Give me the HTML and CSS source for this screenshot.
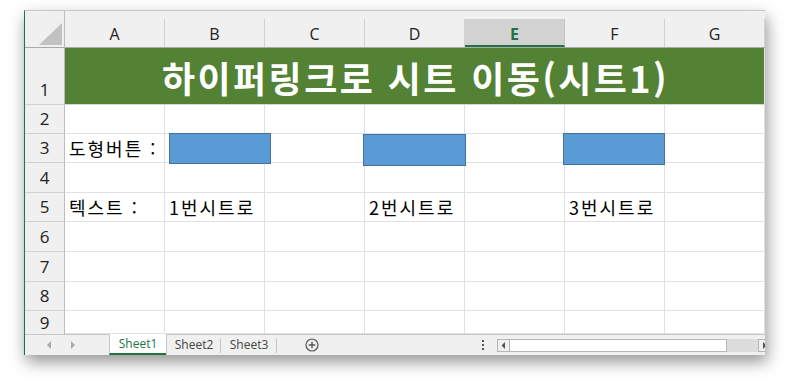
FILE: index.html
```html
<!DOCTYPE html>
<html lang="ko">
<head>
<meta charset="utf-8">
<title>Sheet</title>
<link rel="stylesheet" href="styles.css">
</head>
<body>
<div class="page">
  <div class="window">
    <div class="grid">
      <div class="corner"><svg width="40" height="37" viewBox="0 0 40 37"><polygon points="37,12 37,34 14,34" fill="#c2c2c2"/></svg></div>
      <div class="colh"><span>A</span></div>
      <div class="colh"><span>B</span></div>
      <div class="colh"><span>C</span></div>
      <div class="colh"><span>D</span></div>
      <div class="colh sel"><span>E</span></div>
      <div class="colh"><span>F</span></div>
      <div class="colh"><span>G</span></div>

      <div class="rowh r1">1</div>
      <div class="title">하이퍼링크로 시트 이동(시트1)</div>

      <div class="rowh">2</div>
      <div class="cell"></div><div class="cell"></div><div class="cell"></div><div class="cell"></div><div class="cell"></div><div class="cell"></div><div class="cell"></div>

      <div class="rowh">3</div>
      <div class="cell txt">도형버튼 :</div><div class="cell"></div><div class="cell"></div><div class="cell"></div><div class="cell"></div><div class="cell"></div><div class="cell"></div>

      <div class="rowh">4</div>
      <div class="cell"></div><div class="cell"></div><div class="cell"></div><div class="cell"></div><div class="cell"></div><div class="cell"></div><div class="cell"></div>

      <div class="rowh">5</div>
      <div class="cell txt">텍스트 :</div><div class="cell txt">1번시트로</div><div class="cell"></div><div class="cell txt">2번시트로</div><div class="cell"></div><div class="cell txt">3번시트로</div><div class="cell"></div>

      <div class="rowh">6</div>
      <div class="cell"></div><div class="cell"></div><div class="cell"></div><div class="cell"></div><div class="cell"></div><div class="cell"></div><div class="cell"></div>

      <div class="rowh">7</div>
      <div class="cell"></div><div class="cell"></div><div class="cell"></div><div class="cell"></div><div class="cell"></div><div class="cell"></div><div class="cell"></div>

      <div class="rowh">8</div>
      <div class="cell"></div><div class="cell"></div><div class="cell"></div><div class="cell"></div><div class="cell"></div><div class="cell"></div><div class="cell"></div>

      <div class="rowh r9">9</div>
      <div class="cell"></div><div class="cell"></div><div class="cell"></div><div class="cell"></div><div class="cell"></div><div class="cell"></div><div class="cell"></div>
    </div>

    <div class="tabbar">
      <div class="nav">
        <svg width="6" height="8" viewBox="0 0 6 8"><polygon points="5,0 5,8 1,4" fill="#a8a8a8"/></svg>
        <svg width="6" height="8" viewBox="0 0 6 8"><polygon points="1,0 1,8 5,4" fill="#a8a8a8"/></svg>
      </div>
      <div class="tab active">Sheet1</div>
      <div class="tab">Sheet2</div>
      <div class="tab">Sheet3</div>
      <div class="add"><svg width="14" height="14" viewBox="0 0 14 14"><circle cx="7" cy="7" r="6" fill="none" stroke="#555" stroke-width="1.2"/><path d="M7 3.8V10.2M3.8 7H10.2" stroke="#555" stroke-width="1.4"/></svg></div>
      <div class="dots"><i></i><i></i><i></i></div>
      <div class="hscroll">
        <div class="btn"><svg width="5" height="7" viewBox="0 0 5 7"><polygon points="4,0 4,7 0.5,3.5" fill="#555"/></svg></div>
        <div class="track"></div>
        <div class="rest"></div>
        <div class="btn r"><svg width="5" height="7" viewBox="0 0 5 7"><polygon points="1,0 1,7 4.5,3.5" fill="#555"/></svg></div>
      </div>
    </div>

    <div class="shape s1"></div>
    <div class="shape s2"></div>
    <div class="shape s3"></div>
  </div>
</div>
</body>
</html>
```

FILE: styles.css
```css
* { box-sizing: border-box; }
html, body { margin: 0; padding: 0; background: #fff; }
body { font-family: "Noto Sans CJK KR", "Noto Sans", sans-serif; }

.page {
  padding: 10px 0 0 24px;
  width: 790px;
  height: 391px;
  overflow: hidden;
}

.window {
  position: relative;
  width: 741px;
  height: 345px;
  border-top: 1px solid #c8c8c8;
  border-left: 1px solid #217346;
  background: #fff;
  box-shadow: 2px 7px 15px rgba(0, 0, 0, 0.42);
  overflow: hidden;
}

.grid {
  display: grid;
  grid-template-columns: 40px repeat(7, 100px);
  grid-template-rows: 37px 57px 29px 29px 30px 29px 30px 30px 29px 23px;
  background: #fff;
}

.corner {
  background: #f0f0f0;
  border-right: 1px solid #bdbdbd;
  border-bottom: 1px solid #a9a9a9;
}
.corner svg { display: block; }

.colh {
  background: #f0f0f0;
  padding-top: 8px;
  border-bottom: 1px solid #a9a9a9;
}
.colh span {
  display: flex;
  height: 100%;
  align-items: center;
  justify-content: center;
  border-right: 1px solid #d2d2d2;
  font-family: "Open Sans", "Noto Sans", sans-serif;
  font-size: 16px;
  color: #222;
  padding-top: 1px;
}
.colh.sel span {
  background: #d2d2d2;
  color: #217346;
  font-weight: 700;
  border-bottom: 2px solid #217346;
  border-right-color: #c4c4c4;
  padding-top: 3px;
}

.rowh {
  background: #f0f0f0;
  border-right: 1px solid #bdbdbd;
  border-bottom: 1px solid #d2d2d2;
  display: flex;
  align-items: flex-end;
  justify-content: center;
  font-family: "Open Sans", "Noto Sans", sans-serif;
  font-size: 17px;
  line-height: 20px;
  color: #222;
  padding-bottom: 4px;
}
.rowh.r9 { border-bottom: none; padding-bottom: 0; line-height: 22px; }

.title {
  grid-column: span 7;
  background: #548235;
  color: #fff;
  font-weight: 700;
  font-size: 36px;
  line-height: 40px;
  letter-spacing: 2.4px;
  display: flex;
  align-items: center;
  justify-content: center;
  padding: 1px 0 0 2px;
  border-right: 1px solid #e1e1e1;
  border-bottom: 1px solid #d6d6d6;
}

.cell {
  border-right: 1px solid #e1e1e1;
  border-bottom: 1px solid #e1e1e1;
}
.cell.txt {
  display: flex;
  align-items: flex-end;
  padding: 0 0 3px 4px;
  font-size: 18px;
  letter-spacing: 2px;
  line-height: 22px;
  color: #000;
  white-space: nowrap;
}

.tabbar {
  display: flex;
  align-items: stretch;
  height: 21px;
  background: #f0f0f0;
  border-top: 1px solid #c6c6c6;
  font-family: "Open Sans", "Noto Sans", sans-serif;
  font-size: 12px;
  color: #444;
}
.tabbar > * { flex-shrink: 0; }
.nav {
  width: 84px;
  display: flex;
  align-items: center;
  justify-content: flex-start;
  gap: 18px;
  padding-left: 21px;
}
.nav svg { display: block; }
.tab {
  width: 56px;
  display: flex;
  align-items: center;
  justify-content: center;
  position: relative;
  padding-bottom: 1px;
}
.tab::after {
  content: "";
  position: absolute;
  right: 0;
  top: 3px;
  bottom: 2px;
  width: 1px;
  background: #c6c6c6;
}
.tab.active {
  width: 57px;
  background: #fff;
  color: #217346;
  border-left: 1px solid #c6c6c6;
  border-bottom: 2px solid #217346;
  margin-top: -1px;
  padding-bottom: 0;
}
.tab.active::after { display: none; }
.tab.active + .tab { border-left: 1px solid #c6c6c6; width: 55px; }
.add {
  width: 69px;
  display: flex;
  align-items: center;
  justify-content: center;
}
.add svg { display: block; }
.dots {
  width: 151px;
  display: flex;
  flex-direction: column;
  align-items: flex-end;
  justify-content: center;
  gap: 2px;
  padding-right: 13px;
}
.dots i {
  display: block;
  width: 2px;
  height: 2px;
  background: #555;
}
.hscroll {
  flex: 1 1 0;
  min-width: 0;
  overflow: hidden;
  display: flex;
  align-items: center;
  height: 13px;
  margin-top: 4px;
}
.hscroll > * { flex-shrink: 0; }
.hscroll .btn {
  width: 13px;
  height: 13px;
  border: 1px solid #b6b6b6;
  background: #f0f0f0;
  display: flex;
  align-items: center;
  justify-content: center;
}
.hscroll .btn svg { display: block; }
.hscroll .track {
  width: 217px;
  height: 13px;
  background: #fff;
  border: 1px solid #b6b6b6;
  border-left: none;
}
.hscroll .rest {
  width: 31px;
  height: 13px;
  background: #dcdcdc;
}

.shape {
  position: absolute;
  background: #5b9bd5;
  border: 1.5px solid #41719c;
}
.s1 { left: 144px; top: 122px; width: 102px; height: 31px; }
.s2 { left: 338px; top: 123px; width: 103px; height: 32px; }
.s3 { left: 538px; top: 122px; width: 102px; height: 32px; }
```
